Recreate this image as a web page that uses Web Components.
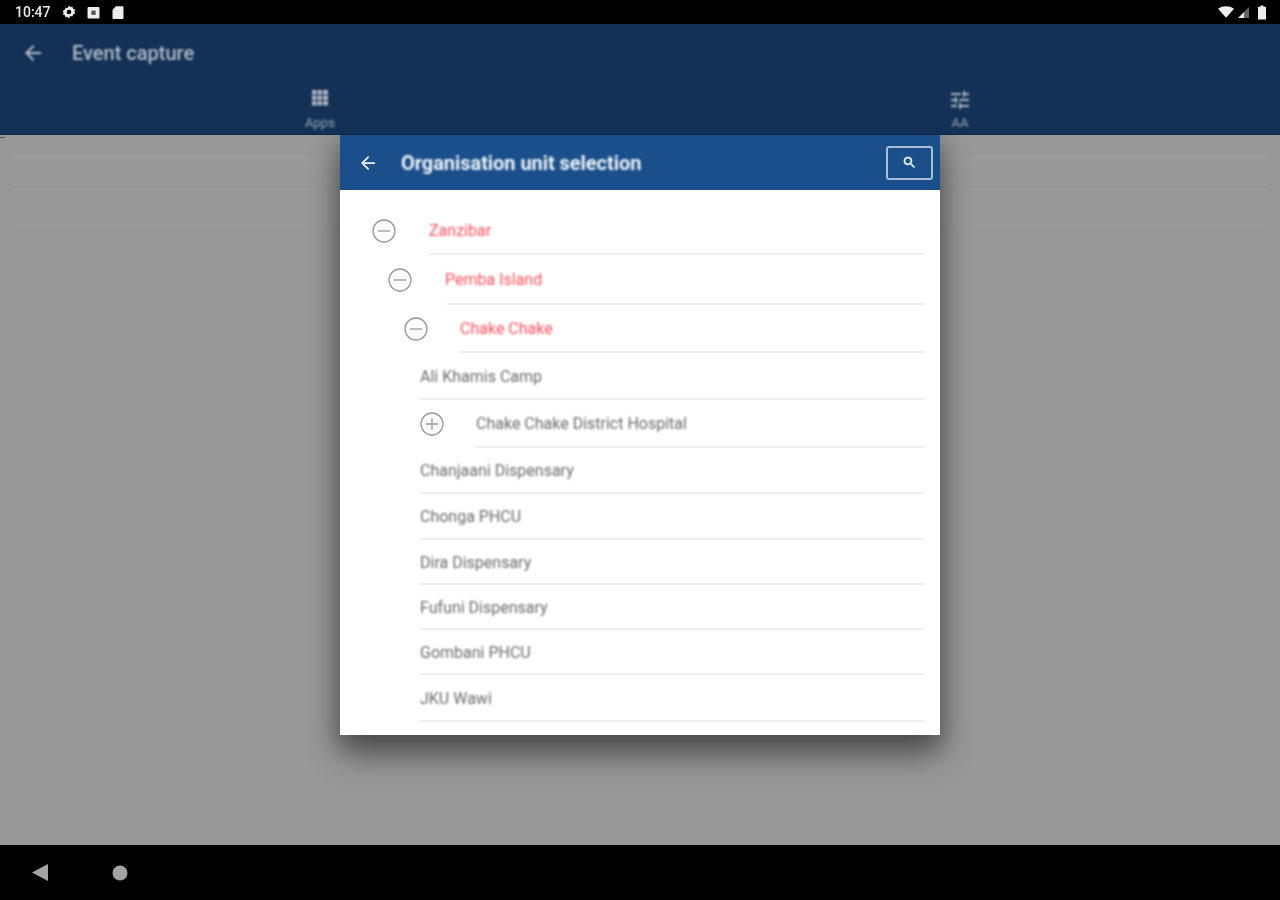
<!DOCTYPE html>
<html><head><meta charset="utf-8">
<style>
html,body{margin:0;padding:0;width:1280px;height:900px;overflow:hidden;background:#000;font-family:Roboto,"Liberation Sans",sans-serif}
#screen{display:flex;flex-direction:column;width:1280px;height:900px;position:relative}
</style></head><body>
<div id="screen">
<status-bar></status-bar>
<app-bar title="Event capture"></app-bar>
<back-cards></back-cards>
<nav-bar></nav-bar>
<org-dialog title="Organisation unit selection">
<tree-row label="Zanzibar" state="open" level="0" text="429" selected h="48"></tree-row>
<tree-row label="Pemba Island" state="open" level="1" text="445" selected h="50"></tree-row>
<tree-row label="Chake Chake" state="open" level="2" text="460" selected h="48"></tree-row>
<tree-row label="Ali Khamis Camp" text="420" h="47"></tree-row>
<tree-row label="Chake Chake District Hospital" state="closed" level="3" text="476" h="48"></tree-row>
<tree-row label="Chanjaani Dispensary" text="420" h="46"></tree-row>
<tree-row label="Chonga PHCU" text="420" h="46"></tree-row>
<tree-row label="Dira Dispensary" text="420" h="45"></tree-row>
<tree-row label="Fufuni Dispensary" text="420" h="45"></tree-row>
<tree-row label="Gombani PHCU" text="420" h="45"></tree-row>
<tree-row label="JKU Wawi" text="420" h="47"></tree-row>
</org-dialog>
</div>
<script>
function def(name,css,html){
  customElements.define(name,class extends HTMLElement{
    connectedCallback(){
      if(this.shadowRoot)return;
      const r=this.attachShadow({mode:'open'});
      r.innerHTML='<style>'+css+'</style>'+(typeof html==='function'?html(this):html);
    }
  });
}
def('status-bar',`
:host{display:flex;align-items:center;height:24px;background:#000;padding:0 14px 0 15px;box-sizing:border-box;flex:none;filter:blur(.7px)}
.t{font:500 14px/24px Roboto,sans-serif;color:#e8e8e8;margin-right:0}
svg{display:block;fill:#eee}
.l{display:flex;align-items:center;gap:11px}
.r{margin-left:auto;display:flex;align-items:center;gap:3px}
`,`
<div class="l"><span class="t">10:47</span>
<svg width="14" height="14" viewBox="0 0 14 14"><path d="M7 .6l1.400 1.500 2-.4.7 2 1.900.9-.5 2 .5 1.900-1.900.9-.7 2-2-.4L7 13.400l-1.400-1.500-2 .4-.7-2L1 9.400l.5-1.900L1 5.600l1.900-.9.7-2 2 .4z"/><circle cx="7" cy="7" r="2.300" fill="#000"/></svg>
<svg width="13" height="13" viewBox="0 0 12 12"><rect x=".5" y="1" width="11" height="10.500" rx="1"/><rect x="4" y="4.200" width="4" height="4" fill="#555"/></svg>
<svg width="14" height="15" viewBox="0 0 14 14"><path d="M5 .8h6.500a1 1 0 0 1 1 1v10.600a1 1 0 0 1-1 1h-9a1 1 0 0 1-1-1V4.300z"/></svg></div>
<div class="r">
<svg width="17" height="12" viewBox="0 0 18 12"><path d="M0 2.600C2.300.9 5.400 0 8.500 0s6.200.9 8.500 2.600L8.500 12z"/></svg>
<svg width="11" height="11" viewBox="0 0 11 11" style="margin-right:6px"><path d="M0 11L6 5v6z"/><path d="M6 5l5-5v11H6z" fill="#666"/></svg>
<svg width="8" height="15" viewBox="0 0 8 14"><path d="M2.500 0h3v1.200H8V14H0V1.200h2.500z"/></svg>
</div>`);

def('app-tab',`
:host{flex:1;display:flex;flex-direction:column;align-items:center;color:#98a2b0;font:400 13px/14px Roboto,sans-serif;filter:blur(.8px)}
.i{height:24px;display:flex;align-items:center;justify-content:center}
svg{display:block}
span{margin-top:4px}
`,h=>`<div class="i">${h.getAttribute('icon')==='apps'
?'<svg style="margin-bottom:4px" width="18" height="18" viewBox="0 0 18 18" fill="#b0b7c0"><path d="M1 1h4.500v4.500H1zM6.500 1H11v4.500H6.500zM12 1h5v4.500h-5zM1 6.500h4.500V11H1zM6.500 6.500H11V11H6.500zM12 6.500h5V11h-5zM1 12h4.500v4.500H1zM6.500 12H11v4.500H6.500zM12 12h5v4.500h-5z"/></svg>'
:'<svg width="24" height="24" viewBox="0 0 24 24" fill="#b0b7c0"><path d="M3 17v2h6v-2H3zM3 5v2h10V5H3zm10 16v-2h8v-2h-8v-2h-2v6h2zM7 9v2H3v2h4v2h2V9H7zm14 4v-2H11v2h10zm-6-4h2V7h4V5h-4V3h-2v6z"/></svg>'}</div><span>${h.getAttribute('label')}</span>`);

def('app-bar',`
:host{display:flex;flex-direction:column;height:111px;background:#133156;flex:none;box-sizing:border-box;border-bottom:1px solid #0e2848;position:relative;z-index:2}
.top{display:flex;align-items:center;height:58px;padding-left:25px;flex:none;filter:blur(.8px)}
svg{display:block}
h1{margin:0 0 0 31px;font:500 20px/24px Roboto,sans-serif;color:#b4bcc7}
.tabs{display:flex;padding-top:6px}
`,h=>`<div class="top"><svg width="16" height="16" viewBox="0 0 16 16" fill="#b4bcc7"><path d="M16 7H3.830l5.590-5.590L8 0 0 8l8 8 1.410-1.410L3.830 9H16z"/></svg><h1>${h.getAttribute('title')}</h1></div>
<div class="tabs"><app-tab icon="apps" label="Apps"></app-tab><app-tab icon="tune" label="AA"></app-tab></div>`);

def('back-cards',`
:host{display:flex;flex-direction:column;flex:1;background:#989898;padding:17px 10px 0;box-sizing:border-box;position:relative}
.c{height:35px;border:1px solid #949494;box-sizing:border-box;background:#999}
.c + .c{height:43px}
.d{position:absolute;left:0;top:2px;width:5px;height:1px;background:#555}
`,`<div class="d"></div><div class="c"></div><div class="c"></div>`);

def('nav-bar',`
:host{display:flex;align-items:center;height:55px;background:#000;flex:none;padding-left:32px;gap:64px}
svg{display:block}
`,`<svg width="16" height="17" viewBox="0 0 16 17" fill="#a3a3a3"><path d="M16 0v17L0 8.500z"/></svg>
<svg width="16" height="16" viewBox="0 0 16 16" fill="#a3a3a3"><circle cx="8" cy="8" r="7.500"/></svg>`);

def('org-dialog',`
:host{position:absolute;z-index:1;left:340px;top:135px;width:600px;height:600px;background:#fff;display:flex;flex-direction:column;overflow:hidden;box-shadow:0 20px 30px 0 rgba(0,0,0,.42),0 4px 24px 3px rgba(0,0,0,.22)}
header{display:flex;align-items:center;height:55px;background:#1a4f8b;flex:none;color:#f1f5f9;padding-left:21px;box-sizing:border-box}
h2{margin:0 0 0 26px;font:700 20px/24px Roboto,sans-serif;letter-spacing:-.05px;flex:1;white-space:nowrap;filter:blur(.8px)}
.s{width:47px;height:34px;border:2px solid #a9bdd6;border-radius:3px;box-sizing:border-box;margin-right:7px;display:flex;align-items:center;justify-content:center}
svg{display:block}
.list{padding:17px 16px 0 0;flex:1;overflow:hidden}
`,h=>`<header><svg width="14" height="14" viewBox="0 0 16 16" fill="#f1f5f9"><path d="M16 7H3.830l5.590-5.590L8 0 0 8l8 8 1.410-1.410L3.830 9H16z"/></svg><h2>${h.getAttribute('title')}</h2>
<div class="s"><svg width="15" height="15" viewBox="0 0 24 24" fill="#f1f5f9" stroke="#f1f5f9" stroke-width=".8"><path d="M15.500 14h-.79l-.28-.27A6.471 6.471 0 0 0 16 9.500 6.500 6.500 0 1 0 9.500 16c1.610 0 3.090-.59 4.230-1.570l.27.28v.79l5 4.990L20.490 19l-4.990-5zm-6 0C7.010 14 5 11.990 5 9.500S7.010 5 9.500 5 14 7.010 14 9.500 11.990 14 9.500 14z"/></svg></div></header>
<div class="list"><slot></slot></div>`);

def('tree-row',`
:host{display:block;position:relative;box-sizing:border-box}
.b{display:flex;align-items:center;box-sizing:border-box;height:100%;padding-top:2px;border-bottom:2px solid #efefef;font:400 16px/20px Roboto,sans-serif;color:#6b6b6b;white-space:nowrap}
.b span{filter:blur(.8px)}
:host([selected]) .b{color:#f9505c}
svg{position:absolute;top:50%;margin-top:-12px;display:block;filter:blur(.4px)}
`,h=>{
  const text=+h.getAttribute('text')-340, level=h.getAttribute('level'), st=h.getAttribute('state');
  h.style.height=h.getAttribute('h')+'px';
  h.style.marginLeft=text+'px';
  const ix=[32,48,64,80][+level]-text;
  const icon=st?`<svg style="left:${ix}px" width="24" height="24" viewBox="0 0 24 24" fill="none" stroke="#999" stroke-width="1.300"><circle cx="12" cy="12" r="11"/><path d="M6 12h12${st==='closed'?'M12 6v12':''}"/></svg>`:'';
  return icon+`<div class="b"><span>${h.getAttribute('label')}</span></div>`;
});
</script>
</body></html>
